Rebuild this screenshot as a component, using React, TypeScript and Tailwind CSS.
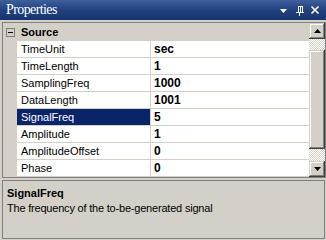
import React from 'react';

const rows = [
  { name: 'TimeUnit', value: 'sec' },
  { name: 'TimeLength', value: '1' },
  { name: 'SamplingFreq', value: '1000' },
  { name: 'DataLength', value: '1001' },
  { name: 'SignalFreq', value: '5', selected: true },
  { name: 'Amplitude', value: '1' },
  { name: 'AmplitudeOffset', value: '0' },
  { name: 'Phase', value: '0' },
];

const bevel =
  'bg-[#d4d0c8] shadow-[inset_-1px_-1px_#404040,inset_1px_1px_#d4d0c8,inset_-2px_-2px_#808080,inset_2px_2px_#ffffff]';

const App: React.FC = () => {
  return (
    <div className="w-[326px] h-[240px] bg-[#d4d0c8] overflow-hidden font-['Liberation_Sans',sans-serif] text-[11px] text-black">
      {/* Title bar */}
      <div className="h-[20px] flex items-center bg-gradient-to-b from-[#3f5f9c] via-[#22427f] to-[#16336f] text-white">
        <span className="pl-[6px] font-['Liberation_Serif',serif] text-[14px] tracking-[-0.6px] leading-none">Properties</span>
        <div className="ml-auto flex items-center gap-[6px] pr-[6px]">
          <svg width="9" height="9" viewBox="0 0 9 9" className="mr-[1px]">
            <path d="M1 3h7L4.5 7z" fill="#fff" />
          </svg>
          <svg width="9" height="11" viewBox="0 0 9 11">
            <path d="M3 1h4v6H3z M5 2v5 M1 7h8 M4.5 7v4" stroke="#fff" strokeWidth="1" fill="none" shapeRendering="crispEdges" />
          </svg>
          <svg width="10" height="10" viewBox="0 0 10 10">
            <path d="M1.5 1.5l7 7M8.5 1.5l-7 7" stroke="#fff" strokeWidth="1.6" />
          </svg>
        </div>
      </div>

      {/* Property grid */}
      <div className="mt-[2px] ml-[2px] w-[324px] h-[156px] border border-[#808080] flex">
        <div className="flex-1 flex flex-col">
          <div className="h-[18px] flex items-center">
            <div className="w-[14px] flex justify-center">
              <div className="w-[9px] h-[9px] border border-[#808080] flex items-center justify-center">
                <div className="w-[5px] h-px bg-black" />
              </div>
            </div>
            <span className="pl-[4px] font-bold">Source</span>
          </div>
          {rows.map((r) => (
            <div key={r.name} className="h-[17px] flex">
              <div className="w-[14px]" />
              <div
                className={
                  r.selected
                    ? 'w-[133px] pl-[4px] flex items-center bg-[#0a246a] text-white border-b border-[#d4d0c8]'
                    : 'w-[133px] pl-[4px] flex items-center bg-white border-b border-[#d4d0c8]'
                }
              >
                {r.name}
              </div>
              <div className="w-px bg-[#d4d0c8]" />
              <div className="flex-1 pl-[3px] flex items-center bg-white border-b border-[#d4d0c8] font-bold text-[12px]">
                {r.value}
              </div>
            </div>
          ))}
        </div>

        {/* Scrollbar */}
        <div className="w-[16px] flex flex-col">
          <div className={`h-[16px] flex items-center justify-center ${bevel}`}>
            <svg width="7" height="4" viewBox="0 0 7 4">
              <path d="M3.5 0L7 4H0z" fill="#000" />
            </svg>
          </div>
          <div className="flex-1 bg-[repeating-conic-gradient(#d4d0c8_0_25%,#ffffff_0_50%)] bg-[length:2px_2px] pt-[11px]">
            <div className={`h-[99px] ${bevel}`} />
          </div>
          <div className={`h-[16px] flex items-center justify-center ${bevel}`}>
            <svg width="7" height="4" viewBox="0 0 7 4">
              <path d="M0 0h7L3.5 4z" fill="#000" />
            </svg>
          </div>
        </div>
      </div>

      {/* Description */}
      <div className="mt-[2px] ml-[2px] w-[323px] h-[59px] border border-[#808080] pl-[4px] pt-[5px]">
        <div className="font-bold leading-[14px]">SignalFreq</div>
        <div className="leading-[16px] tracking-[-0.2px]">The frequency of the to-be-generated signal</div>
      </div>
    </div>
  );
};

export default App;
